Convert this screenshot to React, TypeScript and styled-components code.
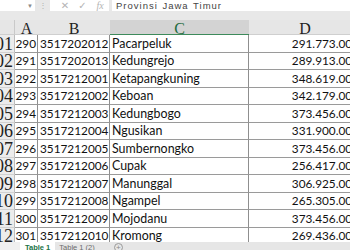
import React from "react";
import styled, { createGlobalStyle } from "styled-components";

const GlobalStyle = createGlobalStyle`
  html, body {
    margin: 0;
    padding: 0;
    background: #e8e8e8;
    overflow: hidden;
  }
  * { box-sizing: border-box; }
`;

const Frame = styled.div`
  width: 350px;
  height: 250px;
  overflow: hidden;
  display: flex;
  flex-direction: column;
  background: #e8e8e8;
`;

const FormulaBar = styled.div`
  height: 11px;
  display: flex;
  flex-shrink: 0;
  font-family: "Liberation Sans", Arial, sans-serif;
  margin-bottom: 9px;
`;

const NameBox = styled.div`
  width: 35px;
  background: #ffffff;
  display: flex;
  align-items: center;
  justify-content: flex-end;
  padding-right: 2px;
  color: #8a8a8a;
  font-size: 6px;
`;

const Grip = styled.div`
  width: 15px;
  display: flex;
  align-items: center;
  justify-content: center;
  color: #b0b0b0;
  font-size: 8px;
`;

const Actions = styled.div`
  width: 59px;
  background: #ffffff;
  display: flex;
  align-items: center;
  padding-left: 6px;
`;

const ActionIcon = styled.span<{ $w: number; $italic?: boolean }>`
  width: ${(p) => p.$w}px;
  color: #b4b4b4;
  font-size: 10px;
  line-height: 11px;
  font-family: ${(p) => (p.$italic ? '"Liberation Serif", serif' : '"DejaVu Sans", sans-serif')};
  font-style: ${(p) => (p.$italic ? "italic" : "normal")};
  text-align: center;
`;

const FormulaInput = styled.div`
  flex: 1;
  margin-left: 3px;
  background: #ffffff;
  color: #444;
  font-size: 9.5px;
  letter-spacing: 1px;
  word-spacing: 1px;
  line-height: 11px;
  padding-left: 4px;
  white-space: nowrap;
  overflow: hidden;
`;

const SheetViewport = styled.div`
  height: 222px;
  overflow: hidden;
  flex-shrink: 0;
`;

const Grid = styled.div`
  display: grid;
  grid-template-columns: 15px 23px 72px 139px 112px;
  grid-template-rows: 15px;
  grid-auto-rows: 17.5px;
  width: 361px;
`;

const ColHead = styled.div<{ $active?: boolean }>`
  background: ${(p) => (p.$active ? "#d3d3d3" : "#e6e6e6")};
  border-bottom: 1px solid ${(p) => (p.$active ? "#3d8a5b" : "#cfcfcf")};
  color: ${(p) => (p.$active ? "#1f6b3f" : "#1e1e1e")};
  font-family: "Liberation Serif", "Times New Roman", serif;
  font-size: 16px;
  line-height: 14px;
  text-align: center;
  padding-top: 2px;
`;

const Corner = styled.div`
  background: #e6e6e6;
  border-right: 1px solid #c9c9c9;
  border-bottom: 1px solid #cfcfcf;
`;

const RowHead = styled.div`
  background: #ececec;
  border-right: 1px solid #bdbdbd;
  border-bottom: 1px solid #d2d2d2;
  display: flex;
  justify-content: flex-end;
  align-items: flex-end;
  overflow: hidden;
  font-family: "Liberation Serif", "Times New Roman", serif;
  font-size: 18px;
  line-height: 16px;
  color: #222;
  padding-right: 1px;
`;

const Cell = styled.div<{ $align?: "left" | "right"; $num?: boolean }>`
  background: #ffffff;
  border-right: 1px solid #8f8f8f;
  border-bottom: 1px solid #9a9a9a;
  font-family: "Lato", "Liberation Sans", sans-serif;
  font-size: ${(p) => (p.$num ? "11.8px" : "12.4px")};
  color: #111;
  white-space: nowrap;
  overflow: hidden;
  display: flex;
  align-items: flex-end;
  justify-content: ${(p) => (p.$align === "right" ? "flex-end" : "flex-start")};
  padding: 0 1px 2px 2px;
  line-height: 13px;
`;

const TabBar = styled.div`
  flex: 1;
  display: flex;
  align-items: flex-start;
  background: #e6e6e6;
  font-family: "Liberation Sans", Arial, sans-serif;
  font-size: 7.5px;
`;

const NavArea = styled.div`
  width: 20px;
  height: 100%;
  background: #f0f0f0;
`;

const Tab = styled.div<{ $active?: boolean }>`
  padding: 1px ${(p) => (p.$active ? "5px" : "4px")} 0;
  height: 100%;
  background: ${(p) => (p.$active ? "#ffffff" : "transparent")};
  color: ${(p) => (p.$active ? "#217346" : "#6b6b6b")};
  font-weight: ${(p) => (p.$active ? 700 : 400)};
  white-space: nowrap;
`;

const AddSheet = styled.div`
  margin-left: 15px;
  margin-top: 1px;
  width: 9px;
  height: 9px;
  border: 1px solid #9a9a9a;
  border-radius: 50%;
  color: #8a8a8a;
  font-size: 8px;
  line-height: 7px;
  text-align: center;
`;

const rows: [string, string, string, string, string][] = [
  ["201", "290", "3517202012", "Pacarpeluk", "291.773.000"],
  ["202", "291", "3517202013", "Kedungrejo", "289.913.000"],
  ["203", "292", "3517212001", "Ketapangkuning", "348.619.000"],
  ["204", "293", "3517212002", "Keboan", "342.179.000"],
  ["205", "294", "3517212003", "Kedungbogo", "373.456.000"],
  ["206", "295", "3517212004", "Ngusikan", "331.900.000"],
  ["207", "296", "3517212005", "Sumbernongko", "373.456.000"],
  ["208", "297", "3517212006", "Cupak", "256.417.000"],
  ["209", "298", "3517212007", "Manunggal", "306.925.000"],
  ["210", "299", "3517212008", "Ngampel", "265.305.000"],
  ["211", "300", "3517212009", "Mojodanu", "373.456.000"],
  ["212", "301", "3517212010", "Kromong", "269.436.000"],
];

export default function App() {
  return (
    <Frame>
      <GlobalStyle />
      <FormulaBar>
        <NameBox>▼</NameBox>
        <Grip>⋮</Grip>
        <Actions>
          <ActionIcon $w={19}>✕</ActionIcon>
          <ActionIcon $w={19}>✓</ActionIcon>
          <ActionIcon $w={19} $italic>
            fx
          </ActionIcon>
        </Actions>
        <FormulaInput>Provinsi Jawa Timur</FormulaInput>
      </FormulaBar>
      <SheetViewport>
        <Grid>
          <Corner />
          <ColHead>A</ColHead>
          <ColHead>B</ColHead>
          <ColHead $active>C</ColHead>
          <ColHead>D</ColHead>
          {rows.map((r) => (
            <React.Fragment key={r[0]}>
              <RowHead>{r[0]}</RowHead>
              <Cell $align="right" $num>
                {r[1]}
              </Cell>
              <Cell $num>{r[2]}</Cell>
              <Cell>{r[3]}</Cell>
              <Cell $align="right" $num>
                {r[4]}
              </Cell>
            </React.Fragment>
          ))}
        </Grid>
      </SheetViewport>
      <TabBar>
        <NavArea />
        <Tab $active>Table 1</Tab>
        <Tab>Table 1 (2)</Tab>
        <AddSheet>+</AddSheet>
      </TabBar>
    </Frame>
  );
}
